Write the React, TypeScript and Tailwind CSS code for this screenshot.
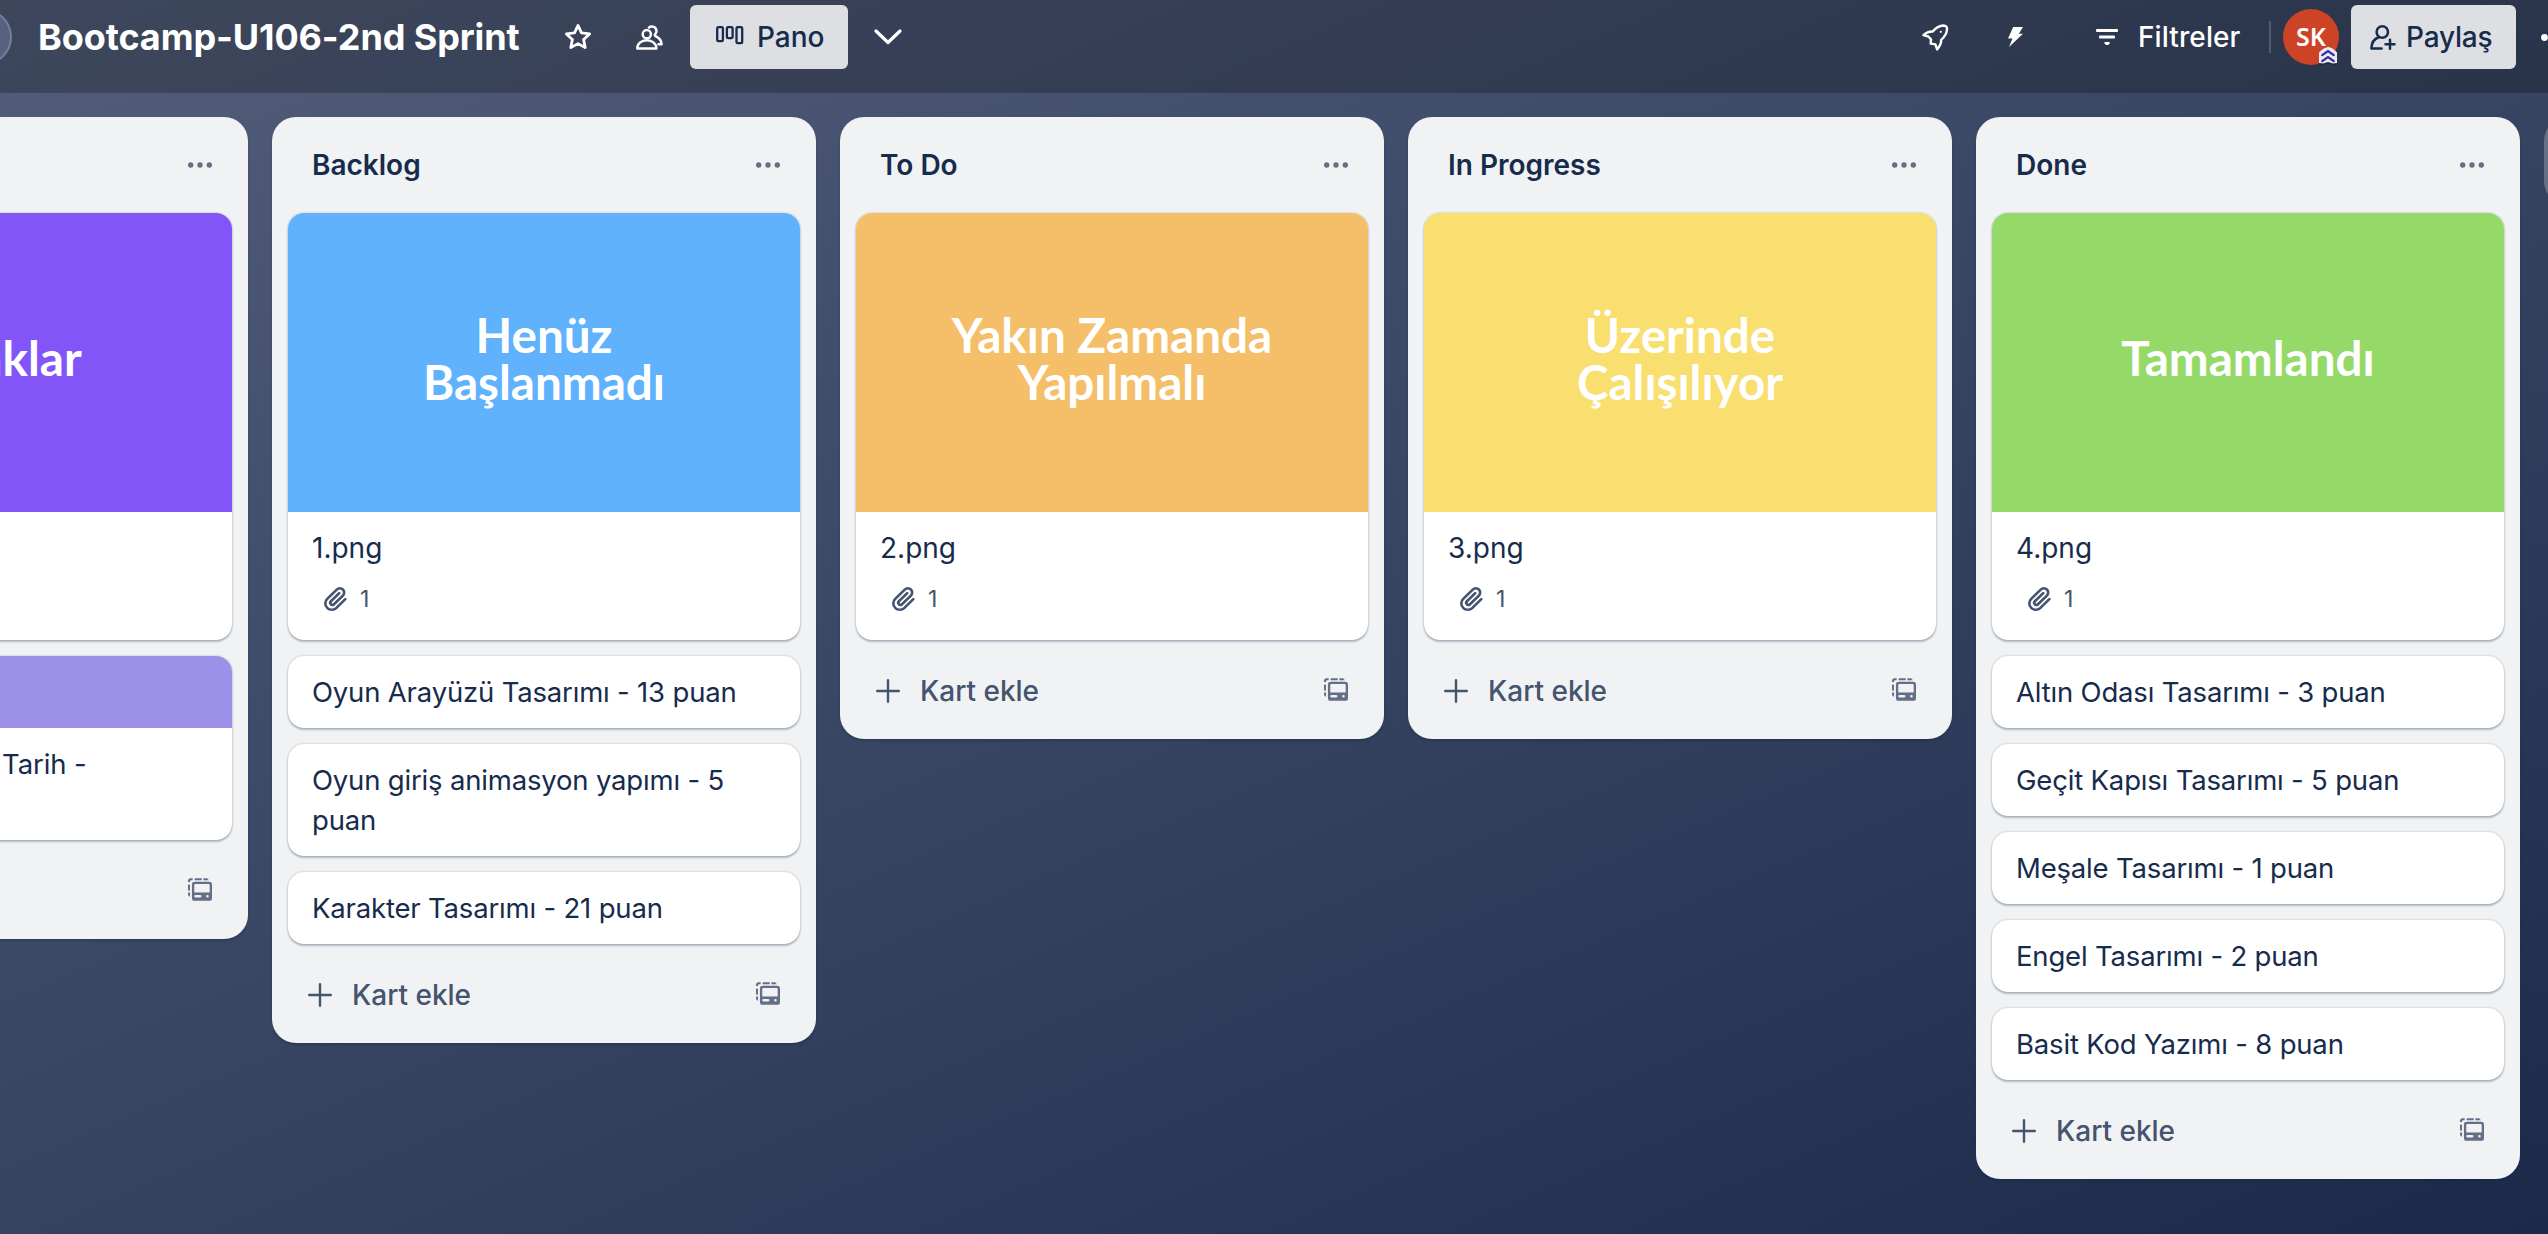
import React from "react";

type Cover = { lines: string[]; color: string; file: string };
type Column = { title: string; cover: Cover; cards: string[] };

const columns: Column[] = [
  {
    title: "Backlog",
    cover: { lines: ["Henüz", "Başlanmadı"], color: "bg-[#5fb2fb]", file: "1.png" },
    cards: ["Oyun Arayüzü Tasarımı - 13 puan", "Oyun giriş animasyon yapımı - 5 puan", "Karakter Tasarımı - 21 puan"],
  },
  {
    title: "To Do",
    cover: { lines: ["Yakın Zamanda", "Yapılmalı"], color: "bg-[#f5bf69]", file: "2.png" },
    cards: [],
  },
  {
    title: "In Progress",
    cover: { lines: ["Üzerinde", "Çalışılıyor"], color: "bg-[#f9de70]", file: "3.png" },
    cards: [],
  },
  {
    title: "Done",
    cover: { lines: ["Tamamlandı"], color: "bg-[#95d969]", file: "4.png" },
    cards: [
      "Altın Odası Tasarımı - 3 puan",
      "Geçit Kapısı Tasarımı - 5 puan",
      "Meşale Tasarımı - 1 puan",
      "Engel Tasarımı - 2 puan",
      "Basit Kod Yazımı - 8 puan",
    ],
  },
];

const cardClass =
  "overflow-hidden rounded-2xl bg-white shadow-[0_2px_2px_rgba(9,30,66,0.25),0_0_2px_rgba(9,30,66,0.31)]";

function Ellipsis() {
  return (
    <svg width="24" height="6" viewBox="0 0 24 6" fill="#626f86">
      <circle cx="2.7" cy="3" r="2.7" />
      <circle cx="12" cy="3" r="2.7" />
      <circle cx="21.3" cy="3" r="2.7" />
    </svg>
  );
}

function PaperclipIcon() {
  return (
    <svg width="32" height="32" viewBox="0 0 24 24" fill="#44546f">
      <path d="M11.643 17.965c-1.53 1.495-4.016 1.496-5.542.004a3.773 3.773 0 0 1 .002-5.412l7.147-6.985a2.316 2.316 0 0 1 3.233-.003c.893.873.895 2.282.004 3.153l-6.703 6.55a.653.653 0 0 1-.914-.008.62.62 0 0 1 0-.902l6.229-6.087a.941.941 0 0 0 0-1.353.995.995 0 0 0-1.384 0l-6.23 6.087a2.502 2.502 0 0 0 0 3.607 2.643 2.643 0 0 0 3.683.009l6.703-6.55a4.074 4.074 0 0 0-.003-5.859 4.306 4.306 0 0 0-6.002.003l-7.148 6.985a5.655 5.655 0 0 0-.001 8.118c2.29 2.239 6.015 2.238 8.31-.005l6.686-6.533a.941.941 0 0 0 0-1.353.995.995 0 0 0-1.384 0l-6.686 6.534z" />
    </svg>
  );
}

function TemplateIcon() {
  return (
    <svg width="24" height="23" viewBox="0 0 73 69" fill="#626f86">
      <path d="M0 12V8a8 8 0 0 1 8-8h6v6h-4a4 4 0 0 0-4 4v2z" />
      <rect x="20" y="0" width="22" height="6" rx="2" />
      <path d="M47 0h8a8 8 0 0 1 8 6H47z" />
      <rect x="0" y="19" width="6" height="19" rx="2" />
      <path d="M0 44h6v12.500a8 8 0 0 1-6-6z" />
      <path
        fillRule="evenodd"
        d="M20 11h45a8 8 0 0 1 8 8v42a8 8 0 0 1-8 8H20a8 8 0 0 1-8-8V19a8 8 0 0 1 8-8zm2 7a3 3 0 0 0-3 3v20a3 3 0 0 0 3 3h41a3 3 0 0 0 3-3V21a3 3 0 0 0-3-3zm1 33a4 4 0 0 0 0 8h14a4 4 0 0 0 0-8zm36 0a4 4 0 1 0 0 8 4 4 0 0 0 0-8z"
      />
    </svg>
  );
}

function StarIcon() {
  return (
    <svg className="shrink-0" width="28" height="28" viewBox="0 0 28 28" fill="none" stroke="#fff" strokeWidth="2.8" strokeLinejoin="round">
      <path d="M14 2.400l3.500 7.500 8.100 1-6 5.600 1.600 8.100-7.200-4-7.200 4 1.600-8.100-6-5.600 8.100-1z" />
    </svg>
  );
}

function PeopleIcon() {
  return (
    <svg className="shrink-0" width="27" height="25" viewBox="0 0 27 25" fill="none" stroke="#fff" strokeWidth="2.5" strokeLinecap="round" strokeLinejoin="round">
      <circle cx="10.800" cy="9.200" r="4.100" />
      <path d="M1.300 23.500c0-4.800 3.800-8.200 9.500-8.200s9.500 3.400 9.500 8.200z" />
      <path d="M13 2.400c2.800-2 7.200-.3 7.500 3.400.1 1.900-.7 3-1.700 3.900 0 .9.400 1.300 1.200 1.700 3.100 1.500 5.400 4 5.600 7.800h-3.200" />
    </svg>
  );
}

function BoardIcon() {
  return (
    <svg className="shrink-0" width="28" height="19" viewBox="0 0 28 19" fill="none" stroke="#172b4d" strokeWidth="2.3">
      <rect x="1.200" y="1.200" width="5.700" height="14" rx="1.200" />
      <rect x="10.900" y="1.200" width="5.700" height="11" rx="1.200" />
      <rect x="20.500" y="1.200" width="5.700" height="16" rx="1.200" />
    </svg>
  );
}

function RocketIcon() {
  return (
    <svg className="shrink-0" width="27" height="27" viewBox="0 0 27 27" fill="none" stroke="#fff" strokeWidth="2.400" strokeLinecap="round" strokeLinejoin="round">
      <path d="M1.500 11.200c2.600-2.500 5.500-3.900 9.200-3.700C14 3.600 17.800 1.700 21.500 1.500c2.600 0 3.700 1.600 3.500 4-.3 4-2.500 7.500-5.800 10.300.1 3.900-1.500 6.800-4.100 9.600l-1.700-5-4.700-.8.300-4.300-2.700-2.800z" />
      <circle cx="18.800" cy="7.800" r="1.100" fill="#fff" stroke="none" />
    </svg>
  );
}

function PersonAddIcon() {
  return (
    <svg className="shrink-0" width="26" height="25" viewBox="0 0 26 25" fill="none" stroke="#172b4d" strokeWidth="2.500" strokeLinecap="round" strokeLinejoin="round">
      <circle cx="12.300" cy="7" r="5.700" />
      <path d="M8.800 12.200C4.200 13.800 1.500 17.600 1.400 23.500h10.200" />
      <path d="M15.500 19.300h9M20 14.800v9" />
    </svg>
  );
}

function AdminBadge() {
  return (
    <svg className="absolute top-[38px] left-[36px]" width="18" height="18" viewBox="0 0 18 18">
      <path d="M0 17.500V6.500L5 1.200Q9-1 13 1.200L18 6.500v11l-3 .5-6-1.500L3 18z" fill="#1c2b41" />
      <path d="M0 16V5.500Q5 .2 9 0t9 5.500V16l-4 .5-5-1.500-5 1.500z" fill="#eceaf6" />
      <path d="M3.200 8.200L9 4l5.800 4.200M3.200 14.200L9 10l5.800 4.200" fill="none" stroke="#352c9c" strokeWidth="2.200" strokeLinecap="round" />
    </svg>
  );
}

function Header() {
  return (
    <header className="flex h-[93px] w-full items-center overflow-hidden bg-black/24 pb-[19px] text-[28px] font-medium text-white">
      <div className="-ml-[44px] size-14 shrink-0 rounded-full border-2 border-[#75809a] bg-[#566280]" />
      <h1 className="ml-[26px] w-[526px] shrink-0 text-[36px] leading-[48px] font-bold tracking-[-0.1px] whitespace-nowrap">
        Bootcamp-U106-2nd Sprint
      </h1>
      <StarIcon />
      <div className="ml-[44px] shrink-0">
        <PeopleIcon />
      </div>
      <button className="ml-[27px] flex h-16 w-[158px] shrink-0 items-center rounded-md bg-[#dedfe3] pl-[26px] text-[#172b4d]">
        <span className="mb-1">
          <BoardIcon />
        </span>
        <span className="ml-[13px]">Pano</span>
      </button>
      <svg className="ml-[26px] shrink-0" width="28" height="16" viewBox="0 0 28 16" fill="none" stroke="#fff" strokeWidth="3.200" strokeLinecap="round" strokeLinejoin="round">
        <path d="M2 2l12 11.500L26 2" />
      </svg>
      <div className="ml-[1020px] shrink-0">
        <RocketIcon />
      </div>
      <svg className="ml-[59px] shrink-0" width="15" height="20" viewBox="0 0 15 20" fill="#fff">
        <path d="M5.200 0H15l-4.200 6.800H15L1 20l3.500-8.500H0z" />
      </svg>
      <svg className="ml-[73px] shrink-0" width="22" height="16" viewBox="0 0 22 16" fill="#fff">
        <rect width="22" height="3" rx="1" />
        <rect x="3" y="6.600" width="16" height="3" rx="1" />
        <path d="M8.500 13h5.200v1.500l-1.600 1.500h-2l-1.600-1.500z" />
      </svg>
      <span className="ml-5 w-[131px] shrink-0 tracking-[0.1px]">Filtreler</span>
      <div className="h-8 w-0.5 shrink-0 bg-[#4f5b6f]" />
      <div className="relative ml-3 flex size-14 shrink-0 items-center justify-center rounded-full bg-[#cc4425]">
        <span className="font-['Noto_Sans'] text-[25px] font-semibold">SK</span>
        <AdminBadge />
      </div>
      <button className="ml-3 flex h-16 w-[165px] shrink-0 items-center rounded-md bg-[#dedfe3] pl-[19px] tracking-[-0.2px] text-[#172b4d]">
        <PersonAddIcon />
        <span className="ml-[10px]">Paylaş</span>
      </button>
      <svg className="ml-[25px] shrink-0" width="27" height="7" viewBox="0 0 27 7" fill="#fff">
        <circle cx="3.500" cy="3.500" r="3.400" />
        <circle cx="13.500" cy="3.500" r="3.400" />
        <circle cx="23.500" cy="3.500" r="3.400" />
      </svg>
    </header>
  );
}

function CoverArt({ lines, color }: { lines: string[]; color: string }) {
  return (
    <div className={`flex h-[299px] flex-col items-center justify-center pb-2 font-['Lato'] text-[47.600px] leading-[46.500px] font-bold text-white ${color}`}>
      {lines.map((line) => (
        <span key={line}>{line}</span>
      ))}
    </div>
  );
}

function ColumnShell({ title, children }: { title: string; children: React.ReactNode }) {
  return (
    <section className="w-[544px] shrink-0 rounded-3xl bg-[#f1f2f4] px-4 shadow-[0_2px_2px_rgba(9,30,66,0.25)]">
      <div className="flex h-24 items-center justify-between pr-5 pl-6">
        <h2 className="text-[28px] font-semibold">{title}</h2>
        <Ellipsis />
      </div>
      <div className="flex flex-col gap-4">{children}</div>
      <div className="flex h-[99px] items-center pt-[2px] pr-5 pl-5 text-[#44546f]">
        <svg width="24" height="24" viewBox="0 0 24 24" fill="none" stroke="#44546f" strokeWidth="2.400" strokeLinecap="round">
          <path d="M12 1.200v21.600M1.200 12h21.600" />
        </svg>
        <span className="ml-5 text-[28px] font-medium">Kart ekle</span>
        <span className="mb-[2px] ml-auto">
          <TemplateIcon />
        </span>
      </div>
    </section>
  );
}

export default function App() {
  return (
    <div className="flex h-[1234px] w-full flex-col overflow-hidden bg-[linear-gradient(157deg,#525e7a_0%,#1c2a4a_100%)] font-['Inter',sans-serif] text-[#172b4d]">
      <Header />
      <main className="-ml-[296px] flex items-start gap-6 pt-6">
        <ColumnShell title="">
          <article className={cardClass}>
            <CoverArt lines={["Kaynaklar"]} color="bg-[#8355f8]" />
            <div className="h-32" />
          </article>
          <article className={cardClass}>
            <div className="h-[72px] bg-[#9d90e9]" />
            <p className="h-28 py-4 pl-[282px] text-[27.500px] leading-10 tracking-[-0.1px]">Tarih -</p>
          </article>
        </ColumnShell>
        {columns.map((column) => (
          <ColumnShell key={column.title} title={column.title}>
            <article className={cardClass}>
              <CoverArt lines={column.cover.lines} color={column.cover.color} />
              <div className="h-32 px-6 pt-4">
                <p className="text-[28px] leading-10">{column.cover.file}</p>
                <div className="flex h-[62px] items-center gap-2 pl-2 text-[23px] text-[#44546f]">
                  <PaperclipIcon />
                  <span>1</span>
                </div>
              </div>
            </article>
            {column.cards.map((card) => (
              <article key={card} className={`${cardClass} px-6 py-4 text-[27.500px] leading-10 tracking-[-0.18px]`}>
                {card}
              </article>
            ))}
          </ColumnShell>
        ))}
        <div className="h-[88px] w-[544px] shrink-0 rounded-3xl bg-white/24" />
      </main>
    </div>
  );
}
